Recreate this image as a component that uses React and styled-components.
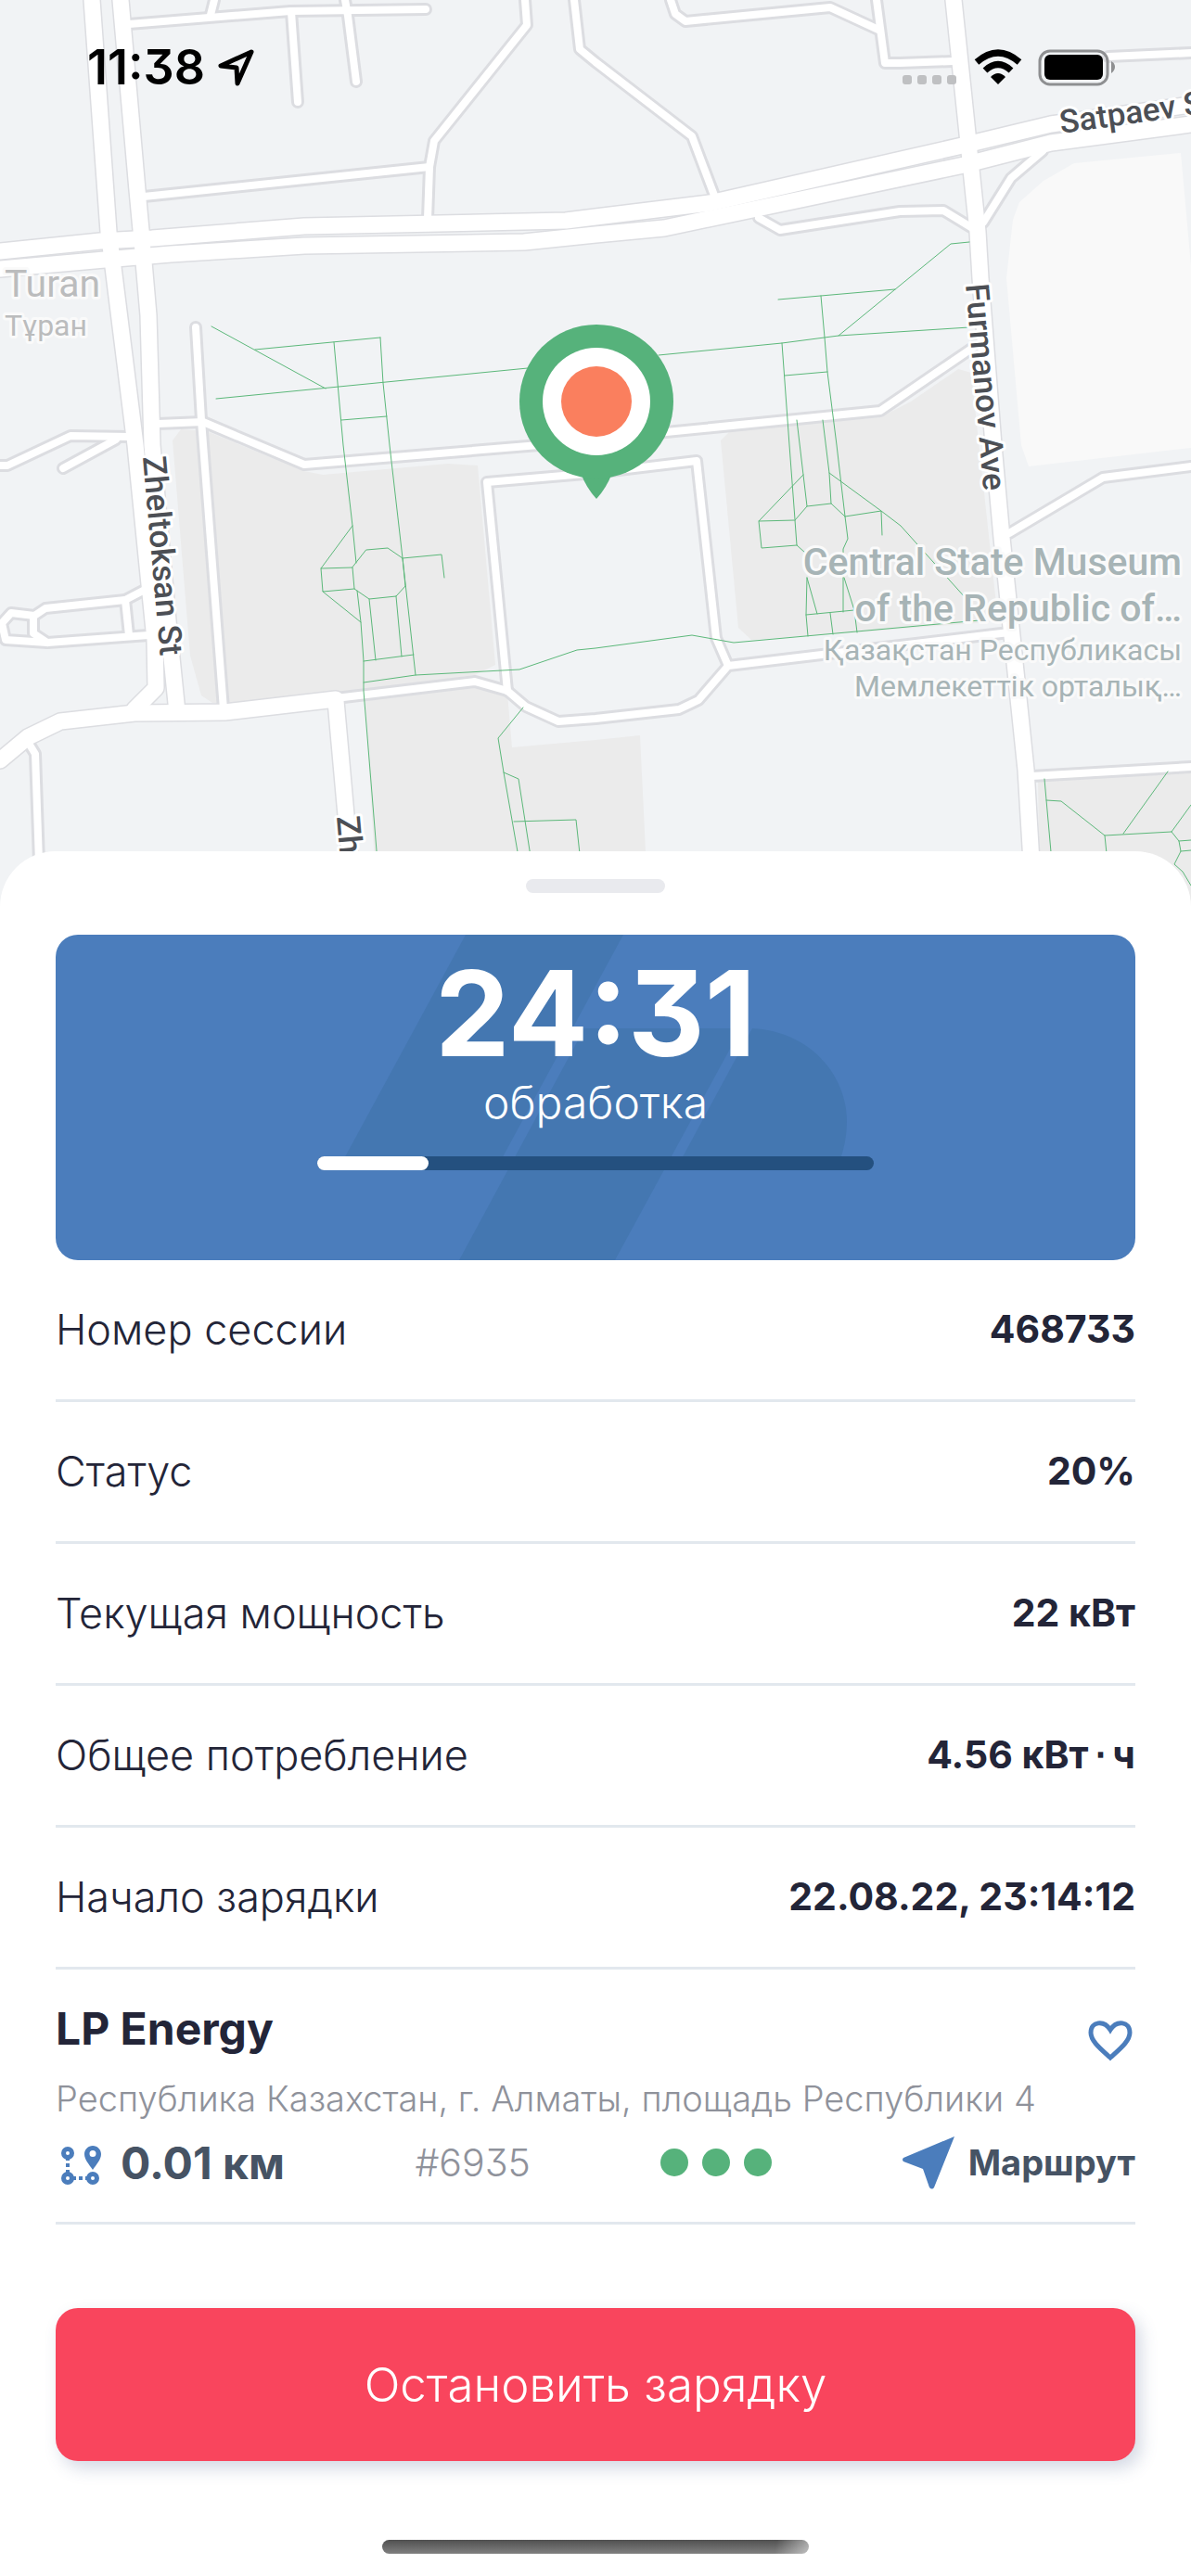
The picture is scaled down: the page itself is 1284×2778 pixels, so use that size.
import React from 'react';
import styled, { createGlobalStyle } from 'styled-components';

const GlobalStyle = createGlobalStyle`
  * {
    box-sizing: border-box;
  }

  body {
    margin: 0;
    background: #fff;
    color: #232538;
    font-family: Inter, "Open Sans", sans-serif;
    font-feature-settings: "cv09";
  }

  button {
    font: inherit;
    border: 0;
    padding: 0;
    background: none;
    cursor: pointer;
  }
`;

const session = [
  { label: 'Номер сессии', value: '468733' },
  { label: 'Статус', value: '20%' },
  { label: 'Текущая мощность', value: '22 кВт' },
  { label: 'Общее потребление', value: '4.56 кВт\u2009⋅\u2009ч' },
  { label: 'Начало зарядки', value: '22.08.22, 23:14:12' },
];

const station = {
  name: 'LP Energy',
  address: 'Республика Казахстан, г. Алматы, площадь Республики 4',
  distance: '0.01 км',
  code: '#6935',
  ports: [1, 2, 3],
};

const parks = [
  'M195 463L186 475L205 707L217 750L229 758L248 758L393 745L512 728L534 717L515 502L483 500L348 512L328 508L223 465Z',
  'M393 748L512 735L547 748L552 806L642 798L690 793L699 980H407Z',
  'M787 465L777 475L796 677L810 690L925 682L1076 670L1047 402L1033 398L982 433L949 450Z',
  'M1119 842L1284 832V980H1121Z',
];

const minorRoads = [
  'M139 26L313 12L459 10',
  'M231 0L227 16',
  'M372 0L375 17L384 88',
  'M314 13L321 110',
  'M566 0L568 27L468 152L463 180L461 236',
  'M155 212L463 180',
  'M619 0L625 53L642 67L746 147L772 216',
  'M723 0L728 15L739 23L895 8L947 32',
  'M945 0L954 68L970 68L1027 66',
  'M1195 61L1284 57',
  'M818 235L841 248L970 228L1017 227L1050 247',
  'M1124 163L1090 192L1060 240',
  'M170 457L219 455L328 501L642 475L718 466L949 443L1056 370',
  'M211 353L217 453L241 765',
  'M140 471L76 470L8 502L0 502',
  'M125 474L68 505',
  'M156 636L135 647L49 656L37 664L12 661L2 672L6 690L51 693L160 685',
  'M36 664L36 683L51 693',
  'M135 647L139 685',
  'M30 800L38 813L42 930',
  'M362 753L512 735L547 745L567 762L602 778L642 775L732 765L753 755L785 718L1088 682',
  'M547 745L525 520L642 510L751 497L772 688L785 718',
  'M1088 575L1189 515L1284 503',
  'M1112 837L1284 827',
];

const mainRoads = [
  'M99 0L117 250L122 288L146 480L163 650L167 690L168 742L145 765',
  'M130 0L148 205L152 248L160 340L164 480L182 680L191 768',
  'M0 820L30 795L65 778L145 769L242 768L362 754',
  'M362 756L374 890L378 930',
  'M0 290L113 280L184 274L328 265L565 261L642 253L716 246L1039 178L1133 154L1284 134',
  'M0 271L108 260L164 257L328 244L610 238L642 234L765 219L1033 158L1133 134L1284 113',
  'M1028 0L1054 250L1057 300L1071 480L1080 580L1106 830L1112 930',
];

const footpaths = [
  'M228 352L351 419M275 377L410 364M233 430L569 397',
  'M360 369L370 480L380 567L384 607M410 364L413 413L420 480L434 602L448 728',
  'M368 453L417 449',
  'M395 593L418 591L434 602L437 632L427 643L398 646L382 635L380 612Z',
  'M380 567L346 613L380 612M346 613L348 638L382 635M348 638L389 671',
  'M385 637L389 671L392 713V745L407 930M398 646L405 712M427 643L433 708M392 713L446 706',
  'M392 736L448 728L560 722L622 701L642 699L746 685L791 693L1056 669V658',
  'M434 602L476 598L479 623',
  'M564 763L537 796L543 833L560 930M543 833L559 840L573 930M554 886L621 884L626 930',
  'M710 383L843 370L904 362L1045 353',
  'M839 323L965 312M904 362L1025 263L1045 261',
  'M885 319L889 364L892 401L902 480L911 557L914 581L909 592V660',
  'M843 370L851 480L857 560M846 405L892 401',
  'M859 453L866 512L870 546L896 543L911 557M887 453L894 510L896 543',
  'M870 546L857 561L859 588L868 596M866 512L818 562L857 561M818 562L821 591L859 588',
  'M911 557L950 551L951 577M894 510L950 551L971 567L1041 645',
  'M870 623L869 663L871 686M870 623L881 662M910 623L921 658L924 682',
  'M869 663L921 658M895 661L898 684',
  'M1126 840L1134 930M1128 863L1144 864L1191 901L1263 897L1284 868M1191 901L1194 930',
  'M1211 899L1259 832M1263 897L1271 907L1273 918L1266 932L1275 940L1284 955',
  'M1271 907L1284 906M1273 918L1284 917',
];

const CityMap = () => (
  <MapCanvas viewBox="0 0 1284 980" preserveAspectRatio="xMidYMin slice" aria-label="Карта">
    <rect width="1284" height="980" fill="#f1f3f5" />
    {parks.map((d) => <path key={d} d={d} fill="#ebebeb" />)}
    <path d="M1273 165L1158 176L1125 195L1099 218L1092 237L1085 300L1101 480L1109 503L1284 483V287Z" fill="#f9f9f9" />
    <g fill="none" strokeLinejoin="round" strokeLinecap="round">
      <g stroke="#dcdde1" strokeWidth="14">
        {minorRoads.map((d) => <path key={d} d={d} />)}
      </g>
      <g stroke="#dcdde1" strokeWidth="20">
        {mainRoads.map((d) => <path key={d} d={d} />)}
      </g>
      <g stroke="#fff" strokeWidth="8">
        {minorRoads.map((d) => <path key={d} d={d} />)}
      </g>
      <g stroke="#fff" strokeWidth="17">
        {mainRoads.map((d) => <path key={d} d={d} />)}
      </g>
      <g stroke="#5cb87a" strokeWidth="1">
        {footpaths.map((d) => <path key={d} d={d} />)}
      </g>
    </g>

    <StreetName transform="translate(1144 144) rotate(-8)">Satpaev St</StreetName>
    <StreetName transform="translate(1041 307) rotate(85)">Furmanov Ave</StreetName>
    <StreetName transform="translate(154 493) rotate(85)">Zheltoksan St</StreetName>
    <StreetName transform="translate(363 881) rotate(85)">Zheltoksan St</StreetName>
    <PlaceName x="5" y="320">Turan</PlaceName>
    <PlaceName x="5" y="362" $small>Тұран</PlaceName>
    <PlaceName x="1274" y="620" $museum>Central State Museum</PlaceName>
    <PlaceName x="1274" y="670" $museum>of the Republic of…</PlaceName>
    <PlaceName x="1274" y="712" $museum $small>Қазақстан Республикасы</PlaceName>
    <PlaceName x="1274" y="751" $museum $small>Мемлекеттік орталық…</PlaceName>

    <path d="M626 510Q632 526 643 538Q654 526 660 510Z" fill="#56b27b" />
    <circle cx="643" cy="433" r="83" fill="#56b27b" />
    <circle cx="643" cy="433" r="58" fill="#fff" />
    <circle cx="643" cy="433" r="38" fill="#fa7f5e" />
  </MapCanvas>
);

const StatusIcons = () => (
  <svg width="232" height="46" viewBox="0 0 232 46" aria-hidden="true">
    <g fill="#bfc0c2">
      <rect x="1" y="31" width="10" height="10" rx="3" />
      <rect x="17" y="31" width="10" height="10" rx="3" />
      <rect x="33" y="31" width="10" height="10" rx="3" />
      <rect x="49" y="31" width="10" height="10" rx="3" />
    </g>
    <g fill="none" stroke="#000" strokeWidth="7">
      <path d="M81 17Q104 -3 127 17" />
      <path d="M90 26Q104 13 118 26" />
    </g>
    <path d="M96 33Q104 25 112 33L104 41Z" />
    <rect x="149" y="5" width="73" height="36" rx="11" fill="none" stroke="#8e8f91" strokeWidth="3" />
    <rect x="154" y="9" width="63" height="27" rx="6" />
    <path d="M226 16Q230 18 230 22T226 29Z" fill="#8e8f91" />
  </svg>
);

const Watermark = () => (
  <WatermarkSvg viewBox="0 0 1164 351" preserveAspectRatio="xMidYMid slice" fill="#4477b1" aria-hidden="true">
    <path d="M442 0H612L478 247H308Z" />
    <path d="M570 101H739L603 351H435Z" />
    <path d="M751 101C812 104 853 150 853 202Q853 225 844 247H672Z" />
  </WatermarkSvg>
);

const RouteIcon = () => (
  <svg width="50" height="50" viewBox="0 0 50 50" fill="none" stroke="#4b7dbc" strokeWidth="5" aria-hidden="true">
    <circle cx="13" cy="15" r="4.5" />
    <circle cx="13" cy="42" r="4.5" />
    <circle cx="40" cy="42" r="4.5" />
    <path d="M13 20V23M13 26V30M13 33V37M18 42H22M25 42H29M32 42H35" strokeWidth="4" />
    <path
      d="M40 7C35 7 31 11 31 16C31 22 36 27 40 33C44 27 49 22 49 16C49 11 45 7 40 7ZM40 12A3 3 0 1 1 40 19A3 3 0 1 1 40 12Z"
      fill="#4b7dbc"
      fillRule="evenodd"
      stroke="none"
    />
  </svg>
);

const App = () => (
  <>
    <GlobalStyle />
    <Screen>
      <MapArea>
        <CityMap />
        <StatusBar>
          <Clock>
            11:38
            <svg width="40" height="40" viewBox="0 0 40 40" fill="none" stroke="#000" strokeWidth="5" strokeLinejoin="round" aria-hidden="true">
              <path d="M36 3L3 18L20 20L21 37Z" />
            </svg>
          </Clock>
          <StatusIcons />
        </StatusBar>
      </MapArea>

      <Sheet>
        <Handle />
        <Timer>
          <Watermark />
          <Time>24:31</Time>
          <Stage>обработка</Stage>
          <Track role="progressbar" aria-valuenow={20} aria-valuemin={0} aria-valuemax={100}>
            <Progress style={{ width: '20%' }} />
          </Track>
        </Timer>

        <Details>
          {session.map(({ label, value }) => (
            <Row key={label}>
              <Label>{label}</Label>
              <Value>{value}</Value>
            </Row>
          ))}
        </Details>

        <Station>
          <StationHead>
            <StationName>{station.name}</StationName>
            <Favourite aria-label="В избранное">
              <svg width="54" height="50" viewBox="0 0 54 50" fill="none" stroke="#4b7dbc" strokeWidth="5" aria-hidden="true">
                <path d="M27 44C16 34 6 26 6 17C6 5 20 3 27 14C34 3 48 5 48 17C48 26 38 34 27 44Z" />
              </svg>
            </Favourite>
          </StationHead>
          <Address>{station.address}</Address>
          <Meta>
            <Distance>
              <RouteIcon />
              {station.distance}
            </Distance>
            <Code>{station.code}</Code>
            <Ports>
              {station.ports.map((port) => <Port key={port} />)}
            </Ports>
            <RouteLink href="#route">
              <svg width="56" height="58" viewBox="0 0 56 58" fill="#4b7dbc" aria-hidden="true">
                <path d="M56 1L1 24Q-1 26 1 28L22 36L29 56Q32 59 34 56Z" />
              </svg>
              Маршрут
            </RouteLink>
          </Meta>
        </Station>

        <StopButton>Остановить зарядку</StopButton>
        <HomeIndicator />
      </Sheet>
    </Screen>
  </>
);

const Screen = styled.main`
  display: flex;
  flex-direction: column;
  min-height: 100vh;
`;

const MapArea = styled.header`
  position: relative;
  height: 980px;
  overflow: hidden;
`;

const MapCanvas = styled.svg`
  position: absolute;
  inset: 0;
  width: 100%;
  height: 100%;
`;

const StreetName = styled.text`
  font-family: Roboto, sans-serif;
  font-size: 35px;
  font-weight: 500;
  fill: #4c4f55;
  stroke: #fff;
  stroke-width: 6px;
  stroke-linejoin: round;
  paint-order: stroke;
`;

const PlaceName = styled.text`
  font-family: Roboto, sans-serif;
  font-size: ${({ $small }) => ($small ? 32 : 41)}px;
  font-weight: ${({ $museum, $small }) => ($museum && !$small ? 500 : 400)};
  text-anchor: ${({ $museum }) => ($museum ? 'end' : 'start')};
  fill: ${({ $museum }) => ($museum ? '#a7b4b6' : '#bbbcbd')};
  stroke: #fafafa;
  stroke-width: 6px;
  stroke-linejoin: round;
  paint-order: stroke;
`;

const StatusBar = styled.div`
  position: relative;
  display: flex;
  justify-content: space-between;
  align-items: center;
  padding: 48px 80px 0 94px;
`;

const Clock = styled.div`
  display: flex;
  align-items: center;
  gap: 14px;
  font-size: 52px;
  font-weight: 600;
  line-height: 50px;
  color: #000;
`;

const Sheet = styled.section`
  position: relative;
  display: flex;
  flex-direction: column;
  flex: 1;
  margin-top: -62px;
  padding: 30px 60px 24px;
  border-radius: 60px 60px 0 0;
  background: #fff;
`;

const Handle = styled.div`
  align-self: center;
  width: 150px;
  height: 15px;
  border-radius: 8px;
  background: #e9eaee;
`;

const Timer = styled.div`
  position: relative;
  display: flex;
  flex-direction: column;
  align-items: center;
  height: 351px;
  margin-top: 45px;
  padding-top: 20px;
  border-radius: 24px;
  background: #4b7dbc;
  color: #fff;
  overflow: hidden;
`;

const WatermarkSvg = styled.svg`
  position: absolute;
  inset: 0;
  width: 100%;
  height: 100%;
`;

const Time = styled.div`
  position: relative;
  font-size: 128px;
  font-weight: 700;
  line-height: 130px;
`;

const Stage = styled.div`
  position: relative;
  font-size: 48px;
  font-weight: 300;
  line-height: 62px;
`;

const Track = styled.div`
  position: relative;
  width: 600px;
  max-width: 80%;
  height: 15px;
  margin-top: 27px;
  border-radius: 8px;
  background: #24507f;
`;

const Progress = styled.div`
  height: 100%;
  border-radius: 8px;
  background: #fff;
`;

const Details = styled.dl`
  margin: 0;
`;

const Row = styled.div`
  display: flex;
  justify-content: space-between;
  align-items: center;
  height: 153px;
  padding-bottom: 2px;
  border-bottom: 3px solid #e2e8ee;
`;

const Label = styled.dt`
  font-size: 45px;
  font-weight: 300;
`;

const Value = styled.dd`
  margin: 0;
  font-size: 41px;
  font-weight: 700;
`;

const Station = styled.div`
  height: 275px;
  padding-top: 34px;
  border-bottom: 3px solid #e2e8ee;
`;

const StationHead = styled.div`
  display: flex;
  justify-content: space-between;
  align-items: center;
  height: 60px;
`;

const StationName = styled.h2`
  margin: 0;
  font-size: 48px;
  font-weight: 700;
  line-height: 60px;
`;

const Favourite = styled.button`
  height: 50px;
  margin-top: 24px;
`;

const Address = styled.p`
  margin: 22px 0 0;
  font-size: 38px;
  font-weight: 300;
  line-height: 46px;
  white-space: nowrap;
  color: #8f929b;
`;

const Meta = styled.div`
  display: flex;
  justify-content: space-between;
  align-items: center;
  height: 64px;
  margin-top: 14px;
  color: #465364;
`;

const Distance = styled.div`
  display: flex;
  align-items: center;
  gap: 20px;
  font-size: 48px;
  font-weight: 700;
`;

const Code = styled.div`
  font-size: 41px;
  font-weight: 300;
  color: #8f929b;
`;

const Ports = styled.div`
  display: flex;
  gap: 15px;
`;

const Port = styled.span`
  width: 30px;
  height: 30px;
  border-radius: 50%;
  background: #56b27b;
`;

const RouteLink = styled.a`
  display: flex;
  align-items: center;
  gap: 15px;
  font-size: 38px;
  font-weight: 700;
  color: inherit;
  text-decoration: none;
`;

const StopButton = styled.button`
  height: 165px;
  margin-top: 90px;
  border-radius: 24px;
  background: #f9455d;
  box-shadow: 6px 8px 18px rgba(60, 80, 130, 0.22);
  font-size: 51px;
  font-weight: 300;
  color: #fff;
`;

const HomeIndicator = styled.div`
  align-self: center;
  width: 460px;
  height: 15px;
  margin-top: auto;
  border-radius: 8px;
  background: linear-gradient(100deg, transparent 92%, rgba(255, 255, 255, 0.5)), linear-gradient(#505050, #808080);
`;

export default App;
